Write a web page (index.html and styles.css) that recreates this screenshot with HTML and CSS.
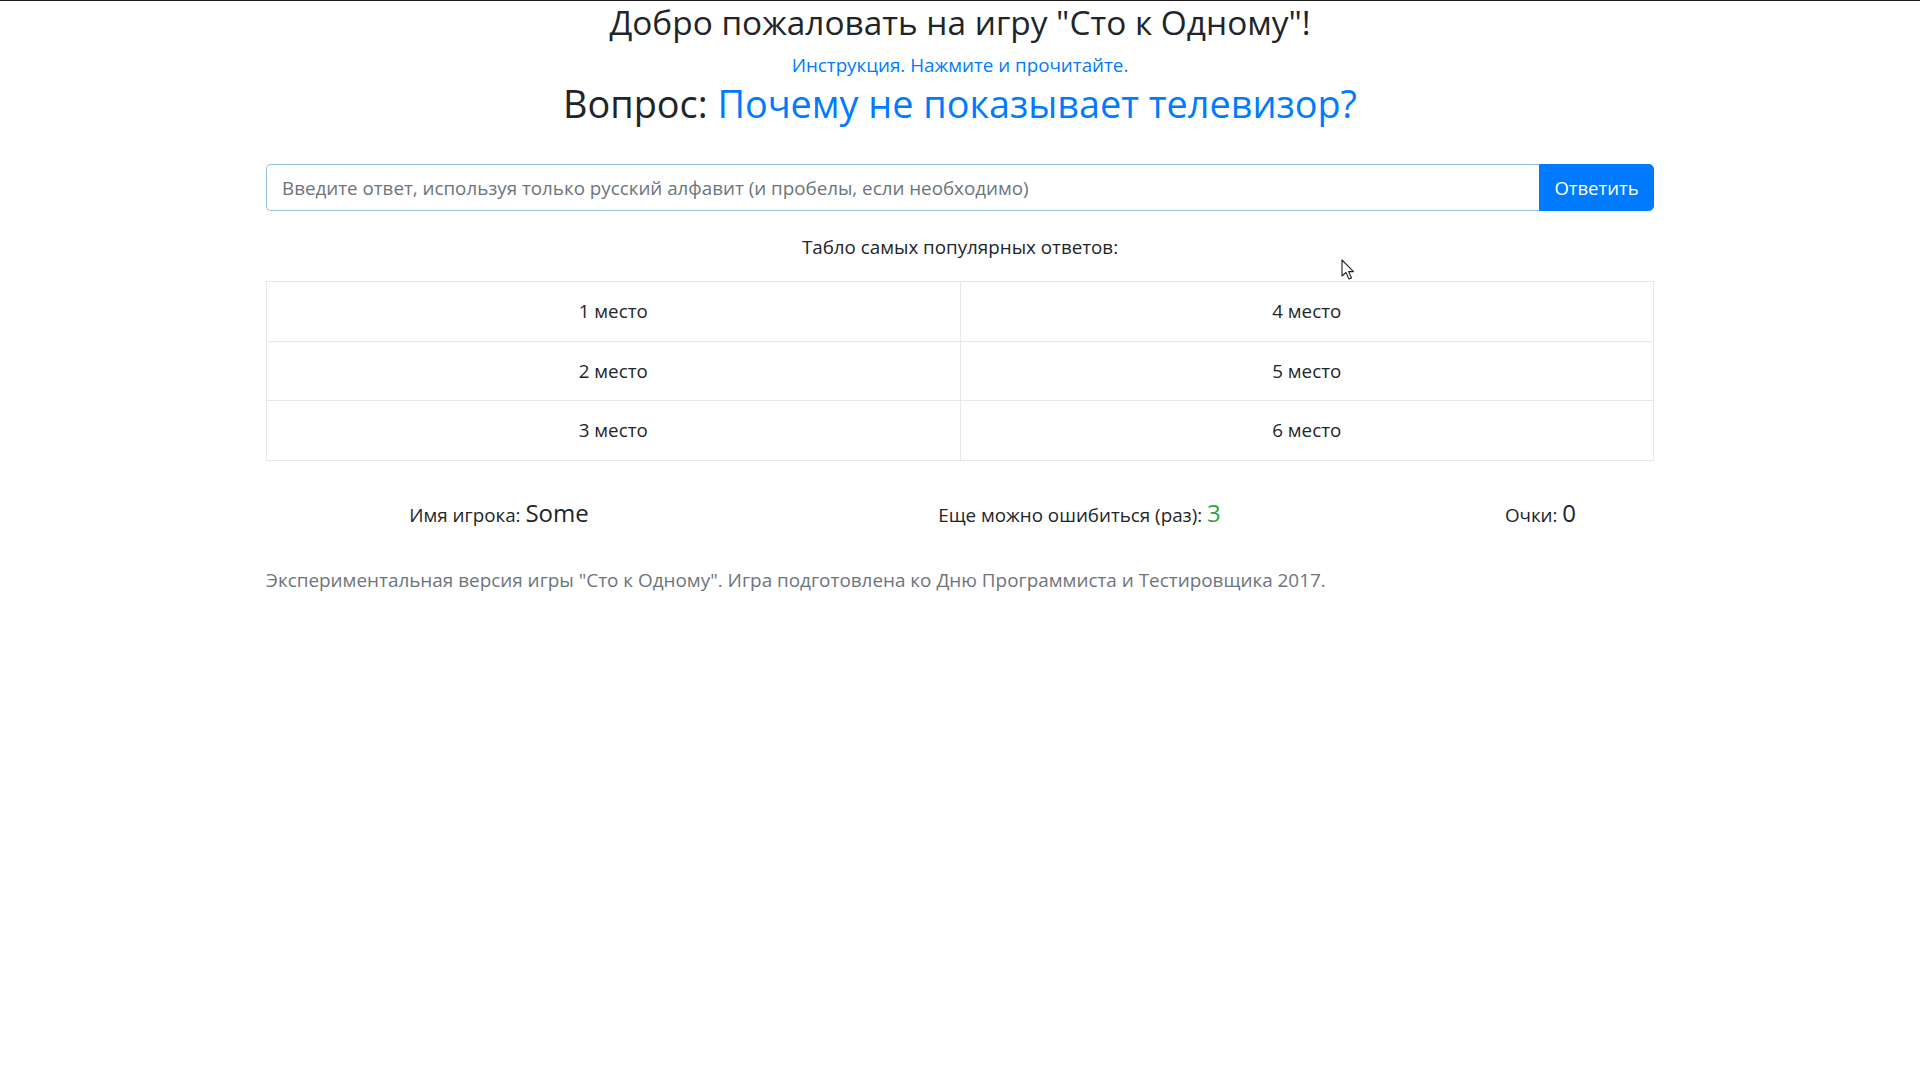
FILE: index.html
```html
<!DOCTYPE html>
<html lang="ru">
<head>
<meta charset="utf-8">
<title>Сто к Одному</title>
<link rel="stylesheet" href="styles.css">
</head>
<body>
<div class="topline"></div>
<main class="container">
  <h3 class="title">Добро пожаловать на игру "Сто к Одному"!</h3>
  <a class="instr" href="#">Инструкция. Нажмите и прочитайте.</a>
  <h2 class="question">Вопрос: <span class="qtext">Почему не показывает телевизор?</span></h2>
  <form class="answer">
    <input class="answer-input" type="text" placeholder="Введите ответ, используя только русский алфавит (и пробелы, если необходимо)">
    <button class="answer-btn" type="button">Ответить</button>
  </form>
  <p class="board-caption">Табло самых популярных ответов:</p>
  <table class="board">
    <tr><td>1 место</td><td>4 место</td></tr>
    <tr><td>2 место</td><td>5 место</td></tr>
    <tr><td>3 место</td><td>6 место</td></tr>
  </table>
  <div class="stats">
    <div class="stat">Имя игрока: <span class="big">Some</span></div>
    <div class="stat">Еще можно ошибиться (раз): <span class="big green">3</span></div>
    <div class="stat">Очки: <span class="big">0</span></div>
  </div>
  <p class="footer">Экспериментальная версия игры "Сто к Одному". Игра подготовлена ко Дню Программиста и Тестировщика 2017.</p>
</main>
<svg class="cursor" width="14" height="22" viewBox="0 0 14 22"><path d="M1 1 L1 17 L5 13.5 L8 20 L10.5 19 L7.6 12.6 L12.5 12.6 Z" fill="#fff" stroke="#222" stroke-width="1.1" stroke-linejoin="round"/></svg>
</body>
</html>
```
FILE: styles.css
```css
html, body {
  margin: 0;
  padding: 0;
  background: #fff;
}
body {
  font-family: "Open Sans", "Noto Sans", sans-serif;
  color: #212529;
  font-size: 18.8px;
  line-height: 30px;
  position: relative;
  min-height: 1080px;
}
.topline {
  height: 1px;
  background: #1a1a1a;
}
.container {
  width: 1388px;
  margin: 0 auto;
  display: flex;
  flex-direction: column;
  align-items: center;
}
.title {
  margin: 0;
  font-size: 33.4px;
  line-height: 42px;
  font-weight: 400;
}
.instr {
  margin-top: 7px;
  color: #007bff;
  text-decoration: none;
  font-size: 18.8px;
  line-height: 30px;
}
.question {
  margin: 0;
  font-size: 37.8px;
  line-height: 48px;
  font-weight: 400;
}
.qtext { color: #007bff; }
.answer {
  margin-top: 36px;
  width: 100%;
  display: flex;
  height: 47px;
}
.answer-input {
  flex: 1;
  box-sizing: border-box;
  height: 47px;
  border: 1px solid #8fc0e8;
  border-right: none;
  border-radius: 5px 0 0 5px;
  padding: 0 15px;
  font-family: inherit;
  font-size: 18.8px;
  color: #495057;
  outline: none;
}
.answer-input::placeholder { color: #6c757d; opacity: 1; }
.answer-btn {
  width: 115px;
  height: 47px;
  border: 1px solid #007bff;
  background: #007bff;
  color: #fff;
  font-family: inherit;
  font-size: 18.5px;
  border-radius: 0 5px 5px 0;
  padding: 0;
}
.board-caption {
  margin: 21px 0 0;
  font-size: 18.8px;
}
.board {
  margin-top: 19px;
  width: 100%;
  border-collapse: collapse;
  table-layout: fixed;
}
.board td {
  border: 1px solid #e6e8ea;
  text-align: center;
  padding: 14.3px 12px;
  line-height: 30px;
  font-size: 18.8px;
}
.stats {
  margin-top: 37px;
  width: 100%;
  display: grid;
  grid-template-columns: 466fr 695fr 227fr;
  text-align: center;
  font-size: 18.8px;
  line-height: 30px;
}
.big { font-size: 24px; }
.green { color: #28a745; }
.footer {
  margin: 35px 0 0;
  align-self: flex-start;
  color: #6c757d;
  font-size: 18.9px;
}
.cursor {
  position: absolute;
  left: 1341px;
  top: 259px;
}
```
